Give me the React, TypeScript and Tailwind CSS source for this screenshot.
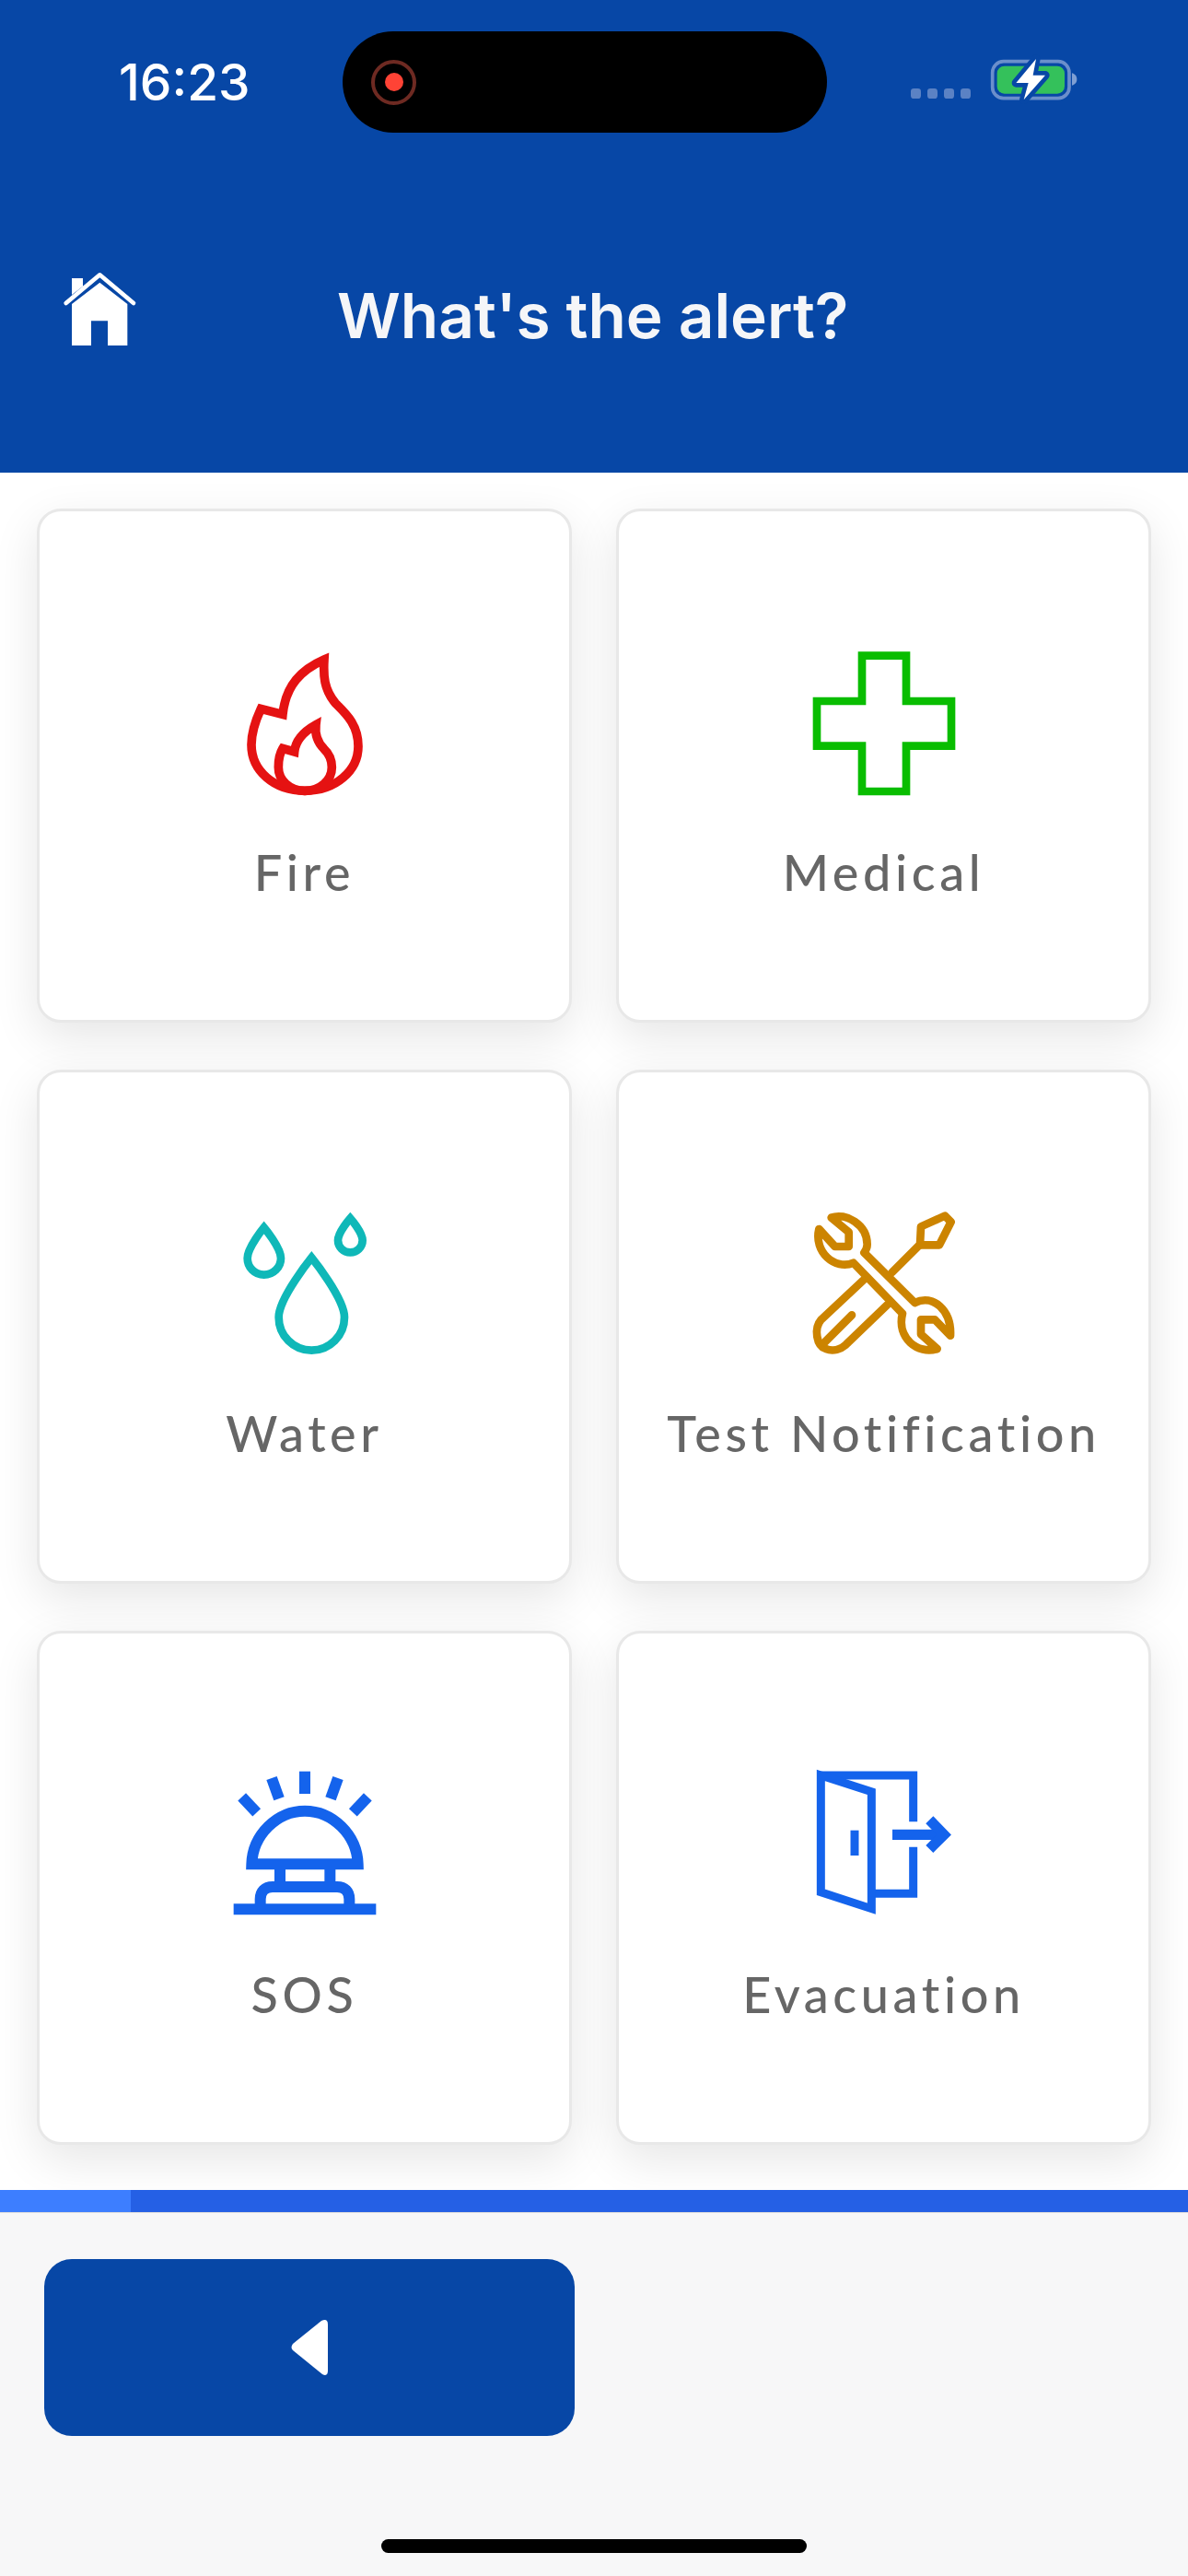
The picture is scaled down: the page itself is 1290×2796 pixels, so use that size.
import React from 'react'

const sans = "font-['Inter',sans-serif]"

function Icon({ children }: { children: React.ReactNode }) {
  return (
    <svg viewBox="0 0 660 660" className="w-[220px] h-[220px] shrink-0">
      {children}
    </svg>
  )
}

function FireIcon() {
  return (
    <Icon>
      <g fill="none" stroke="#E51212" strokeWidth="29" strokeLinejoin="miter">
        <path d="M393 108 C390 160 392 205 430 250 C465 285 504 320 504 390 C504 470 430 535 330 535 C230 535 156 470 156 385 C156 345 170 305 187 268 L258 286 C268 190 320 140 393 108 Z" />
        <path d="M366 320 C362 355 372 378 392 398 C410 415 418 435 418 458 C418 500 380 535 330 535 C280 535 244 500 244 458 C244 435 250 410 258 397 L296 408 C300 365 330 340 366 320 Z" />
      </g>
    </Icon>
  )
}

function MedicalIcon() {
  return (
    <Icon>
      <path
        d="M258 95 H402 V243 H549 V389 H402 V537 H258 V389 H111 V243 H258 Z"
        fill="none"
        stroke="#09BD00"
        strokeWidth="26"
      />
    </Icon>
  )
}

function WaterIcon() {
  return (
    <Icon>
      <g fill="none" stroke="#0FB8B8" strokeWidth="26">
        <path d="M352 228 C352 228 245 360 245 422 C245 482 293 530 352 530 C411 530 459 482 459 422 C459 360 352 228 352 228 Z" />
        <path d="M197 130 C197 130 143 195 143 230 C143 260 167 284 197 284 C227 284 252 260 252 230 C252 195 197 130 197 130 Z" />
        <path d="M478 100 C478 100 438 145 438 172 C438 194 456 211 478 211 C500 211 518 194 518 172 C518 145 478 100 478 100 Z" />
      </g>
    </Icon>
  )
}

function ToolsIcon() {
  return (
    <Icon>
      <g fill="none" stroke="#CC8400" strokeWidth="26" strokeLinejoin="round" strokeLinecap="round">
        <path d="M158 98 C205 80 275 120 275 185 C275 195 270 205 265 212 L430 375 C490 345 550 400 546 482 L495 430 H450 V478 L503 525 C440 545 370 490 390 410 L230 245 C170 270 100 210 118 135 L170 192 H215 V145 Z" />
        <path d="M450 127 L528 92 L548 112 L510 187 L447 187 Z" />
        <path d="M442 190 L356 276" />
        <path d="M262 302 L125 430 C100 460 110 515 140 525 C165 535 190 525 205 512 L340 382" />
        <path d="M225 415 L135 505" />
      </g>
    </Icon>
  )
}

function SosIcon() {
  return (
    <Icon>
      <g fill="none" stroke="#1463EC" strokeWidth="36">
        <path d="M330 74 V147" />
        <path d="M222 96 L246 163" />
        <path d="M438 96 L414 163" />
        <path d="M125 157 L173 208" />
        <path d="M535 157 L487 208" />
        <path d="M157 376 C160 280 240 203 330 203 C420 203 500 280 503 376 Z" />
        <path d="M249 393 V435" />
        <path d="M412 393 V435" />
        <path d="M185 510 V490 C185 465 200 450 225 450 H435 C460 450 475 465 475 490 V510" />
        <path d="M98 523 H562" />
      </g>
    </Icon>
  )
}

function EvacuationIcon() {
  return (
    <Icon>
      <g fill="none" stroke="#1463EC" strokeWidth="27">
        <path d="M124 87 H425 V238" />
        <path d="M425 320 V472 H290" />
        <path d="M124 87 L289 140 V521 L124 467 Z" />
        <path d="M234 266 V348" />
        <path d="M357 280 H520" strokeWidth="34" />
        <path d="M478 232 L525 280 L478 327" strokeWidth="34" />
      </g>
    </Icon>
  )
}

const alerts = [
  { label: 'Fire', icon: <FireIcon /> },
  { label: 'Medical', icon: <MedicalIcon /> },
  { label: 'Water', icon: <WaterIcon /> },
  { label: 'Test Notification', icon: <ToolsIcon /> },
  { label: 'SOS', icon: <SosIcon /> },
  { label: 'Evacuation', icon: <EvacuationIcon /> },
]

function StatusBar() {
  return (
    <div className="flex items-center h-[110px] mt-[34px] pl-[129px]">
      <span className={`${sans} w-[243px] text-[55px] leading-none font-medium text-white`}>16:23</span>
      <div className="flex items-center w-[526px] h-[110px] pl-[31px] rounded-[55px] bg-black">
        <div className="flex items-center justify-center w-[49px] h-[49px] rounded-full border-[4px] border-[#6e2a22]">
          <div className="w-[20px] h-[20px] rounded-full bg-[#ff4335]" />
        </div>
      </div>
      <svg viewBox="0 0 780 300" className="w-[260px] h-[100px] ml-[42px] mt-[2px]">
        <g fill="#5b82c4">
          <rect x="147" y="168" width="33" height="33" rx="10" />
          <rect x="201" y="168" width="33" height="33" rx="10" />
          <rect x="255" y="168" width="33" height="33" rx="10" />
          <rect x="309" y="168" width="33" height="33" rx="10" />
        </g>
        <rect x="413" y="80" width="250" height="120" rx="36" fill="none" stroke="#6b8fcb" strokeWidth="11" />
        <rect x="428" y="95" width="220" height="90" rx="24" fill="#34C15B" />
        <path d="M672 118 C684 122 688 130 688 138 C688 148 684 154 672 158 Z" fill="#7f9fd3" />
        <path
          d="M555 72 L490 150 H530 L515 205 L585 125 H545 Z"
          fill="#fff"
          stroke="#0747A6"
          strokeWidth="28"
          strokeLinejoin="round"
          paintOrder="stroke"
        />
      </svg>
    </div>
  )
}

export default function App() {
  return (
    <div className="flex flex-col w-[1290px] h-[2796px] overflow-hidden bg-white">
      <header className="h-[513px] shrink-0 bg-[#0747A6] flex flex-col">
        <StatusBar />
        <div className="flex items-center h-[110px] mt-[136px] pl-[50px]">
          <svg viewBox="0 0 360 330" className="w-[120px] h-[110px] shrink-0">
            <path d="M84 66 H120 V92 L84 120 Z" fill="#fff" />
            <path d="M65 147 L175 55 L285 147" fill="none" stroke="#fff" strokeWidth="14" strokeLinecap="round" strokeLinejoin="round" />
            <path d="M84 150 L175 80 L265 150 V285 H201 V205 H147 V285 H84 Z" fill="#fff" />
          </svg>
          <h1 className={`${sans} ml-[196px] mt-[16px] text-[67.5px] leading-none font-semibold text-[#f5f6f8]`}>What's the alert?</h1>
        </div>
      </header>

      <main className="grid grid-cols-2 gap-x-[48px] gap-y-[51px] px-[40px] pt-[39px] pb-[49px]">
        {alerts.map((a) => (
          <button
            key={a.label}
            className="flex flex-col items-center h-[558px] pt-[125px] rounded-[26px] border-[3px] border-[#e8e8e8] bg-white shadow-[0_16px_50px_rgba(0,0,0,0.1)]"
          >
            {a.icon}
            <span className="mt-[15px] font-['Lato',sans-serif] text-[54px] leading-[64px] font-medium tracking-[4.6px] text-[#666666] whitespace-nowrap">
              {a.label}
            </span>
          </button>
        ))}
      </main>

      <div className="h-[24px] shrink-0 bg-[#2560E5]">
        <div className="w-[142px] h-full bg-[#3D7EFF]" />
      </div>

      <footer className="flex flex-col flex-1 bg-[#f7f7f8] border-t border-[#dcdcdc]">
        <button className="flex items-center justify-center w-[576px] h-[192px] ml-[48px] mt-[50px] rounded-[30px] bg-[#0747A6]">
          <svg viewBox="0 0 40 62" className="w-[40px] h-[62px]">
            <path d="M33 2 Q40 -1 40 6 V56 Q40 63 34 60 L2 34 Q-1 31 2 27 Z" fill="#fff" />
          </svg>
        </button>
        <div className="self-center w-[462px] h-[15px] mt-[112px] rounded-full bg-black" />
      </footer>
    </div>
  )
}
